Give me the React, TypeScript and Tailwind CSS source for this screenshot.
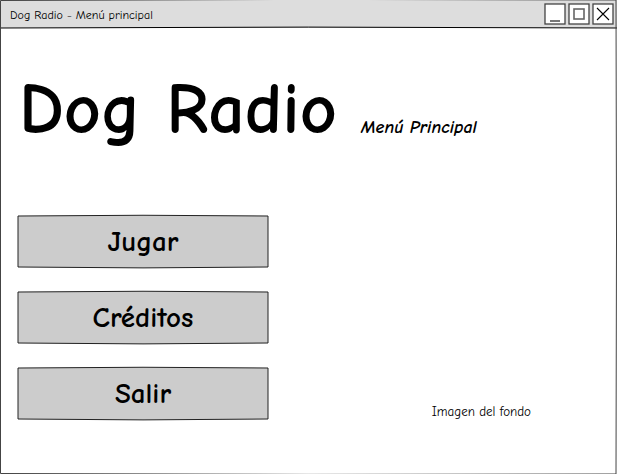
import React from "react";

type BoxProps = { d: string; viewBox: string; fill?: string; stroke?: string };

function SketchOutline({ d, viewBox, fill = "none", stroke = "#000" }: BoxProps) {
  return (
    <svg
      aria-hidden="true"
      viewBox={viewBox}
      preserveAspectRatio="none"
      className="pointer-events-none absolute inset-0 h-full w-full overflow-visible"
    >
      <path d={d} fill={fill} stroke={stroke} strokeWidth="1" vectorEffect="non-scaling-stroke" />
    </svg>
  );
}

function WindowButton({ label, children }: { label: string; children: React.ReactNode }) {
  return (
    <button type="button" aria-label={label} className="h-6 w-6">
      <svg viewBox="0 0 24 24" className="h-6 w-6" fill="none" stroke="#000">
        <rect x="2" y="2" width="20" height="20" fill="#fff" stroke="#444" strokeWidth="1.3" />
        {children}
      </svg>
    </button>
  );
}

function MenuButton({ children }: { children: string }) {
  return (
    <button type="button" className="relative h-[53px] w-full pt-px text-[29px] leading-8 font-bold">
      <SketchOutline
        viewBox="0 0 252 53"
        fill="#ccc"
        stroke="#222"
        d="M1 1 Q126 -.5 251 1 L251 52 Q126 53.8 1 52 Z"
      />
      <span className="relative">{children}</span>
    </button>
  );
}

export default function App() {
  return (
    <div className="relative flex min-h-screen flex-col overflow-hidden bg-white font-['Comic_Sans_MS','Comic_Neue',Lato,sans-serif] text-black">
      <header className="relative flex h-7 items-center justify-between bg-[#ddd] pr-0.5 pl-2.5">
        <SketchOutline viewBox="0 0 617 28" d="M0 28 Q308 26.2 617 28" />
        <h2 className="relative pt-0.5 text-xs leading-4 font-medium">Dog Radio - Menú principal</h2>
        <div className="relative flex">
          <WindowButton label="Minimizar">
            <path d="M7 19 H17" stroke="#777" strokeWidth="2" />
          </WindowButton>
          <WindowButton label="Maximizar">
            <rect x="7" y="7" width="10" height="10" stroke="#666" strokeWidth="1.6" />
          </WindowButton>
          <WindowButton label="Cerrar">
            <path d="M6 6 L18 18 M18 6 L6 18" strokeWidth="1.1" />
          </WindowButton>
        </div>
      </header>

      <main className="flex grow flex-col px-[17px]">
        <div className="flex items-baseline gap-6 pt-[38px] pl-0.5">
          <h1 className="text-7xl leading-[88px] font-bold">Dog Radio</h1>
          <p className="text-lg leading-6 font-bold italic">Menú Principal</p>
        </div>
        <div className="flex items-end justify-between pt-[61px] pr-[69px]">
          <nav aria-label="Menú principal" className="flex w-[252px] flex-col gap-[23px]">
            <MenuButton>Jugar</MenuButton>
            <MenuButton>Créditos</MenuButton>
            <MenuButton>Salir</MenuButton>
          </nav>
          <p className="text-[13px] leading-4 font-medium">Imagen del fondo</p>
        </div>
      </main>

      <SketchOutline
        viewBox="0 0 617 474"
        stroke="#444"
        d="M.5 .5 Q308 -1.5 616 0 Q617 237 616 474 Q308 475 .5 473.5 Z"
      />
    </div>
  );
}
